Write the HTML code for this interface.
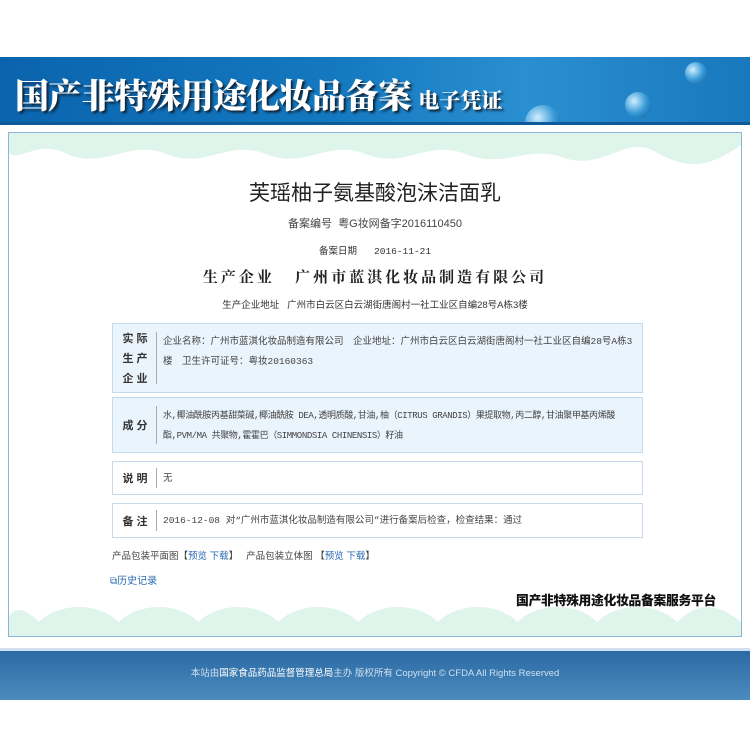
<!DOCTYPE html>
<html><head><meta charset="utf-8"><style>
*{margin:0;padding:0;box-sizing:border-box}
body{width:750px;height:750px;background:#fff;font-family:"Liberation Sans","Noto Sans CJK SC",sans-serif;position:relative;overflow:hidden;color:#333}
.banner{position:absolute;left:0;top:57px;width:750px;height:68px;overflow:hidden;background:linear-gradient(90deg,#0a64ad 0%,#1479c0 45%,#2a8fd0 70%,#1a78bd 100%);border-bottom:3px solid #0d5a9a}
.banner .t{position:absolute;left:15px;top:12px;font-family:"Noto Serif CJK SC",serif;font-weight:900;font-size:34px;color:#fff;text-shadow:2px 2px 2px #123;letter-spacing:-1px}
.banner .s{font-size:21px;letter-spacing:0}
.orb{position:absolute;border-radius:50%;background:radial-gradient(circle at 35% 35%,#cfefff,#3a9ad8 50%,#0b5a9a)}
.box{position:absolute;left:8px;top:132px;width:734px;height:505px;border:1px solid #8fb3d6;background:#fff;overflow:hidden}
.wave{position:absolute;left:0;width:100%;height:36px}
.c{position:absolute;left:0;width:100%;text-align:center}
.row{position:absolute;left:112px;width:531px;border:1px solid #c6d9ec;font-size:9.5px;font-family:"Liberation Mono","Noto Sans CJK SC",monospace}
.row .l{position:absolute;left:0;top:0;bottom:0;width:48px;font-weight:bold;font-size:11px;font-family:"Noto Sans CJK SC",sans-serif;letter-spacing:3px;color:#333}
.row .l div{position:absolute;left:4px;right:4px;top:8px;bottom:8px;border-right:1px solid #aaa;display:flex;align-items:center;justify-content:center;text-align:center;line-height:20px}
.row .v{margin-left:48px;padding:8px 4px 4px 2px;line-height:20px;color:#444}
.blue{background:#eaf4fc}
.foot{position:absolute;left:0;top:648px;width:750px;height:52px;background:linear-gradient(#2b6aa4,#4b8bbd);border-top:3px solid #cfe0f0}
a{color:#2d6cb5;text-decoration:none}
</style></head><body>
<div class="banner">
<div class="orb" style="left:525px;top:48px;width:36px;height:36px"></div>
<div class="orb" style="left:625px;top:35px;width:26px;height:26px"></div>
<div class="orb" style="left:685px;top:5px;width:22px;height:22px"></div>
<div class="t">国产非特殊用途化妆品备案 <span class="s">电子凭证</span></div>
</div>
<div class="box">
<svg class="wave" style="top:0" viewBox="0 0 734 36" preserveAspectRatio="none"><path d="M0 0H734V12C700 36 680 36 650 20 620 0 600 36 560 26 520 10 500 36 460 22 420 5 400 36 360 22 320 5 300 36 260 22 220 5 200 36 160 22 120 5 100 36 60 22 30 5 10 30 0 20Z" fill="#dff5ec"/></svg>
<svg class="wave" style="top:469px" viewBox="0 0 734 36" preserveAspectRatio="none"><path d="M0 36H734V20C710 0 690 0 670 20 650 0 610 0 590 20 570 0 530 0 510 20 490 0 450 0 430 20 410 0 370 0 350 20 330 0 290 0 270 20 250 0 210 0 190 20 170 0 130 0 110 20 90 0 50 0 30 20 15 5 5 5 0 15Z" fill="#dff5ec"/></svg>
<div class="c" style="top:44px;font-size:21px;color:#222">芙瑶柚子氨基酸泡沫洁面乳</div>
<div class="c" style="top:82px;font-size:11px;color:#444">备案编号&nbsp; 粤G妆网备字2016110450</div>
<div class="c" style="top:110px;font-size:9.5px;color:#333;font-family:'Liberation Mono','Noto Sans CJK SC',monospace">备案日期&nbsp;&nbsp; 2016-11-21</div>
<div class="c" style="top:133px;font-size:15px;font-weight:bold;letter-spacing:3px;font-family:'Noto Serif CJK SC',serif;color:#222">生产企业&nbsp;&nbsp; 广州市蓝淇化妆品制造有限公司</div>
<div class="c" style="top:164px;font-size:9.5px;color:#333">生产企业地址&nbsp;&nbsp; 广州市白云区白云湖街唐阁村一社工业区自编28号A栋3楼</div>
</div>
<div class="row blue" style="top:323px;height:70px"><div class="l"><div>实际<br>生产<br>企业</div></div><div class="v">企业名称：广州市蓝淇化妆品制造有限公司　企业地址：广州市白云区白云湖街唐阁村一社工业区自编28号A栋3楼　卫生许可证号：粤妆20160363</div></div>
<div class="row blue" style="top:397px;height:56px"><div class="l"><div>成分</div></div><div class="v" style="font-size:9px;letter-spacing:-0.4px">水,椰油酰胺丙基甜菜碱,椰油酰胺 DEA,透明质酸,甘油,柚（CITRUS GRANDIS）果提取物,丙二醇,甘油聚甲基丙烯酸酯,PVM/MA 共聚物,霍霍巴（SIMMONDSIA CHINENSIS）籽油</div></div>
<div class="row" style="top:461px;height:34px"><div class="l"><div style="top:6px;bottom:6px">说明</div></div><div class="v" style="padding-top:7px">无</div></div>
<div class="row" style="top:503px;height:35px"><div class="l"><div style="top:6px;bottom:6px">备注</div></div><div class="v" style="padding-top:7px">2016-12-08 对“广州市蓝淇化妆品制造有限公司”进行备案后检查，检查结果：通过</div></div>
<div style="position:absolute;left:112px;top:548px;font-size:9.5px;color:#444">产品包装平面图【<a>预览</a> <a>下载</a>】&nbsp;&nbsp; 产品包装立体图 【<a>预览</a> <a>下载</a>】</div>
<div style="position:absolute;left:110px;top:572px;font-size:10px"><a>⧉历史记录</a></div>
<div style="position:absolute;left:516px;top:590px;font-size:12.8px;font-weight:900;color:#111;letter-spacing:-0.3px">国产非特殊用途化妆品备案服务平台</div>
<div class="foot"><div style="text-align:center;margin-top:14px;font-size:9.5px;color:#cfe0f0">本站由<b style="color:#fff;font-weight:normal">国家食品药品监督管理总局</b>主办 版权所有 Copyright © CFDA All Rights Reserved</div></div>
</body></html>
